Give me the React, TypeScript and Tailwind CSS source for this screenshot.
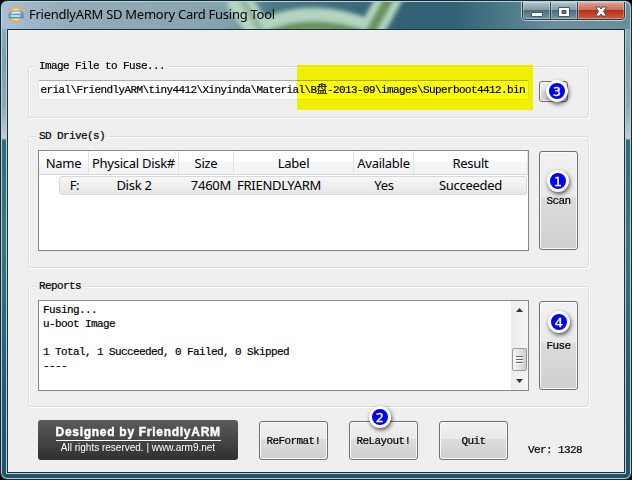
import type { ReactNode } from "react";

const mono =
  "font-['Liberation_Mono','Noto_Sans_CJK_SC',monospace] text-[11px] tracking-[-0.6px] leading-[14px] text-black whitespace-pre [-webkit-text-stroke:0.2px_black]";
const sans = "font-['Noto_Sans','Noto_Sans_CJK_SC',sans-serif] tracking-[-0.27px] text-black whitespace-nowrap";

function Group({ title, className, children }: { title: string; className: string; children: ReactNode }) {
  return (
    <section className={`relative w-[561px] rounded-[3px] border border-[#d5dfe5] shadow-[inset_1px_1px_0_#fff,1px_1px_0_#fff] ${className}`}>
      <div className="ml-[7px] -mt-[8px] flex h-[21px]">
        <h2 className={`h-[14px] bg-[#efefef] pl-[3px] pr-[4px] ${mono}`}>{title}</h2>
      </div>
      <div className="flex items-start pl-[9px]">{children}</div>
    </section>
  );
}

function Badge({ n, className }: { n: number; className: string }) {
  return (
    <span
      className={`absolute z-10 flex size-[22px] items-center justify-center rounded-full border-[3px] border-white bg-[#0000f8] font-['DejaVu_Sans',sans-serif] text-[13px] leading-none tracking-normal text-white shadow-[1px_2px_4px_rgba(0,0,0,0.65)] [-webkit-text-stroke:0.3px_white] ${className}`}
    >
      {n}
    </span>
  );
}

function Button({ label, className, badge, badgeClass = "" }: { label: string; className: string; badge?: number; badgeClass?: string }) {
  return (
    <button
      className={`relative flex shrink-0 items-center justify-center rounded-[3px] border border-[#707070] bg-[linear-gradient(#f2f2f2,#e9e9e9_46%,#dcdcdc_47%,#cfcfcf)] shadow-[inset_0_0_0_1px_#f8f8f8] ${mono} ${className}`}
    >
      {label}
      {badge !== undefined && <Badge n={badge} className={badgeClass} />}
    </button>
  );
}

const columns = [
  { name: "Name", value: "F:", width: "w-[50px]", cell: "w-[29px] text-center" },
  { name: "Physical Disk#", value: "Disk 2", width: "w-[90px]", cell: "w-[90px] text-center" },
  { name: "Size", value: "7460M", width: "w-[55px]", cell: "w-[52px] text-right" },
  { name: "Label", value: "FRIENDLYARM", width: "w-[120px]", cell: "w-[123px] pl-[6px] text-left" },
  { name: "Available", value: "Yes", width: "w-[60px]", cell: "w-[60px] text-center" },
  { name: "Result", value: "Succeeded", width: "w-[114px]", cell: "w-[113px] text-center" },
];

function TitleBar() {
  return (
    <header className="relative flex h-[27px] shrink-0 items-start overflow-hidden bg-[linear-gradient(90deg,#a9bfd6,#94adb9_10%,#8aa5af_30%,#7fa3ac_36%,#4b7986_43%,#336276_64%,#336276_72%,#4b7988_80%,#6d8f9d_88%,#66909c)]">
      <svg className="absolute inset-0" width="628" height="27" viewBox="2 2 628 27">
        <defs>
          <filter id="soft" x="-20%" y="-50%" width="140%" height="200%">
            <feGaussianBlur stdDeviation="2" />
          </filter>
          <filter id="glow" x="-20%" y="-80%" width="140%" height="260%">
            <feGaussianBlur stdDeviation="4" />
          </filter>
        </defs>
        <g filter="url(#soft)" fill="none">
          <path d="M236 -4L262 36M254 36Q308 7 368 32M366 40L394 -10" stroke="#b3d5c1" strokeWidth="25" />
          <path d="M240 -4L264 36" stroke="#8fb39a" strokeWidth="6" />
          <path d="M262 38Q310 15 366 36M366 40L394 -10" stroke="#69925c" strokeWidth="10" />
        </g>
        <path d="M28 15H270" stroke="#e3ebee" strokeOpacity=".5" strokeWidth="14" filter="url(#glow)" />
      </svg>
      <svg className="relative ml-[6px] mt-[4px] shrink-0" width="17" height="17" viewBox="0 0 17 17">
        <circle cx="8" cy="8.5" r="7" fill="#e9dfc4" stroke="#efac40" strokeWidth="1.8" />
        <path d="M1.2 7.8L4.5 5H12L15 7V12H1.2Z" fill="#5fa0cf" stroke="#347da9" strokeWidth=".7" />
        <path d="M2.5 7.8L5 5.5H11.5L13.8 7.2Z" fill="#e2f1fa" />
        <path d="M2.6 10H12" stroke="#d9f2ff" strokeWidth="1.6" />
      </svg>
      <h1 className={`relative ml-[4px] mt-[2px] text-[13px] leading-[20px] ${sans}`}>FriendlyARM SD Memory Card Fusing Tool</h1>
      <div className="absolute right-[5px] top-[-1px] flex h-[19px] w-[103px] overflow-hidden rounded-b-[4px] border border-[#263d49] shadow-[0_0_0_1px_rgba(216,232,237,.75)]">
        <div className="flex w-[28px] items-center justify-center border-r border-[#304c58] bg-[linear-gradient(#b5c6cc,#829ca7_45%,#496b79_48%,#7796a0)] shadow-[inset_0_0_0_1px_rgba(255,255,255,.3)]">
          <svg width="14" height="14"><rect x="1.5" y="8.5" width="11" height="4" rx=".5" fill="white" stroke="#4b5566" /></svg>
        </div>
        <div className="flex w-[27px] items-center justify-center border-r border-[#304c58] bg-[linear-gradient(#b5c6cc,#829ca7_45%,#496b79_48%,#7796a0)] shadow-[inset_0_0_0_1px_rgba(255,255,255,.3)]">
          <svg width="14" height="14"><path d="M1.5 3.5H12.5V12.5H1.5ZM5 6.5V9.5H9V6.5Z" fill="white" fillRule="evenodd" stroke="#4b5566" /></svg>
        </div>
        <div className="flex flex-1 items-center justify-center bg-[linear-gradient(#dfa093,#ce6e5d_45%,#b12f18_48%,#d25d3d)] shadow-[inset_0_0_0_1px_rgba(255,255,255,.3)]">
          <svg width="14" height="14"><path d="M1.5 3H5.5L7 5L8.5 3H12.5L9.5 7.5L12.5 12H8.5L7 10L5.5 12H1.5L4.5 7.5Z" fill="white" stroke="#494f60" /></svg>
        </div>
      </div>
    </header>
  );
}

export default function App() {
  return (
    <main className="h-[480px] w-[632px] overflow-hidden bg-black">
      <div className="flex h-[480px] w-[632px] flex-col rounded-[7px] border border-[#172a34] bg-[linear-gradient(#9db9c6,#7e9fae_12%,#8fa9b3_22%,#c2cfd3_28.7%,#34697b_29.2%,#3b7580_50%,#265673_85%,#245068)] shadow-[inset_0_0_0_1px_#b4d3dc]">
        <div className="mx-[1px] mt-[1px] h-[27px] shrink-0 overflow-hidden rounded-t-[6px]">
          <TitleBar />
        </div>
        <div className="ml-[6px] h-[444px] w-[618px] border border-[#18313d] bg-[#efefef] pl-[20px] pt-[36px] shadow-[0_0_0_1px_#b6d0d7]">
          <Group title="Image File to Fuse..." className="h-[52px]">
            <div className="flex h-[20px] w-[491px] items-center justify-end overflow-hidden rounded-[2px] border border-[#e2e3ea] border-t-[#abadb3] bg-white pr-[3px]">
              <span className={`shrink-0 ${mono}`}>{"erial\\FriendlyARM\\tiny4412\\Xinyinda\\Material\\B盘-2013-09\\images\\Superboot4412.bin"}</span>
            </div>
            <Button label="..." className="ml-[10px] mt-[1px] h-[21px] w-[29px]" badge={3} badgeClass="left-[6px] top-[-2px]" />
            <div className="pointer-events-none absolute left-[268px] top-[-2px] h-[45px] w-[236px] bg-[#ffff00] mix-blend-multiply" />
          </Group>

          <Group title="SD Drive(s)" className="mt-[18px] h-[132px]">
            <div className={`h-[101px] w-[491px] border border-[#828790] bg-white text-[13px] ${sans}`}>
              <div className="flex h-[24px] border-b border-[#d5d5d5] bg-[linear-gradient(#fff_45%,#f7f8fa_46%,#f1f2f4)]">
                {columns.map((c) => (
                  <div key={c.name} className={`${c.width} border-r border-[#e0e3e6] text-center leading-[25px]`}>{c.name}</div>
                ))}
              </div>
              <div className="ml-[20px] mt-[1px] flex h-[19px] w-[468px] rounded-[3px] border border-[#d9d9d9] bg-[linear-gradient(#f8f8f8,#e6e6e6)]">
                {columns.map((c) => (
                  <div key={c.name} className={`shrink-0 leading-[17px] ${c.cell}`}>{c.value}</div>
                ))}
              </div>
            </div>
            <Button label="Scan" className="ml-[10px] mt-[1px] h-[99px] w-[39px]" badge={1} badgeClass="left-[7px] top-[18px]" />
          </Group>

          <Group title="Reports" className="mt-[18px] h-[121px]">
            <div className="flex h-[91px] w-[491px] justify-between border border-[#828790] bg-white">
              <pre className={`pl-[4px] pt-[2px] ${mono}`}>{"Fusing...\nu-boot Image\n\n1 Total, 1 Succeeded, 0 Failed, 0 Skipped\n----"}</pre>
              <div className="flex w-[17px] flex-col items-center bg-[linear-gradient(90deg,#ececec,#f5f5f5)]">
                <svg width="17" height="47"><path d="M5 11L8.5 7L12 11Z" fill="#333" /></svg>
                <div className="flex h-[23px] w-[15px] flex-col items-center justify-center gap-[1px] rounded-[2px] border border-[#999] bg-[linear-gradient(90deg,#f5f5f5,#e5e5e5_45%,#cecece)]">
                  <i className="h-[2px] w-[7px] border-b border-white bg-[#666]" />
                  <i className="h-[2px] w-[7px] border-b border-white bg-[#666]" />
                  <i className="h-[2px] w-[7px] border-b border-white bg-[#666]" />
                </div>
                <svg width="17" height="19"><path d="M5 8L8.5 12L12 8Z" fill="#333" /></svg>
              </div>
            </div>
            <Button label="Fuse" className="ml-[10px] mt-[1px] h-[89px] w-[39px]" badge={4} badgeClass="left-[8px] top-[9px]" />
          </Group>

          <footer className="ml-[10px] mt-[13px] flex items-start">
            <div className="flex h-[40px] w-[200px] flex-col items-center rounded-[3px] bg-[linear-gradient(#5b5b5b,#303030)] font-['Liberation_Sans',Arial,sans-serif] text-white">
              <div className="mt-[5px] h-[16px] w-[165px] whitespace-nowrap border-b border-white text-[12px] font-bold leading-[14px] tracking-[0.72px] [-webkit-text-stroke:0.4px_white]">Designed by FriendlyARM</div>
              <div className="whitespace-nowrap text-[10px] leading-[14px]">All rights reserved. | www.arm9.net</div>
            </div>
            <Button label="ReFormat!" className="ml-[21px] mt-[1px] h-[39px] w-[69px]" />
            <Button label="ReLayout!" className="ml-[21px] mt-[1px] h-[39px] w-[69px]" badge={2} badgeClass="left-[19px] top-[-16px]" />
            <Button label="Quit" className="ml-[21px] mt-[1px] h-[39px] w-[69px]" />
            <span className={`ml-[20px] mt-[23px] ${mono}`}>Ver: 1328</span>
          </footer>
        </div>
      </div>
    </main>
  );
}
